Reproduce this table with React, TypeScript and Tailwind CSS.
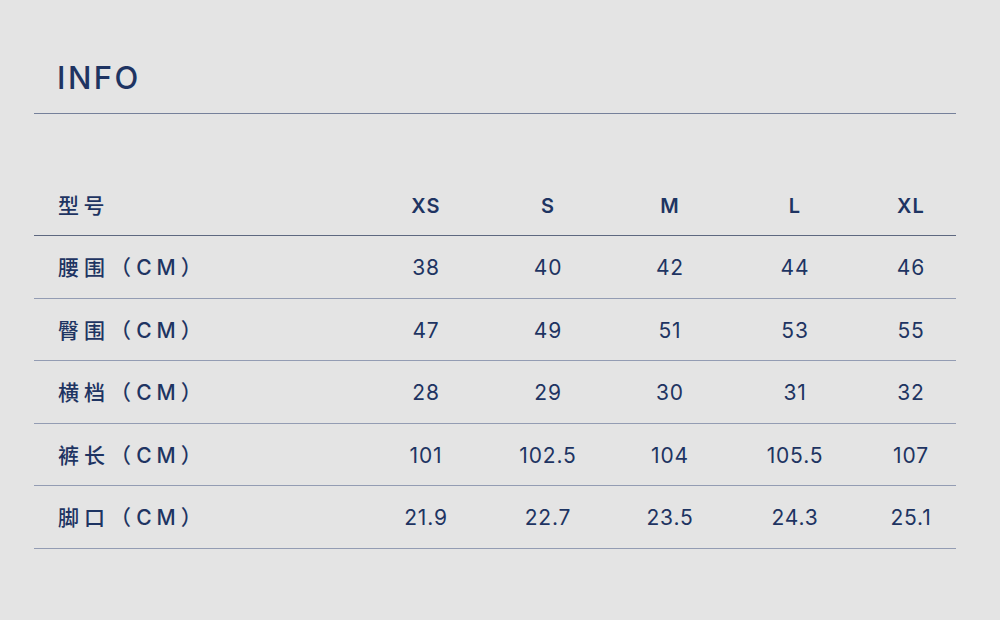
import React from "react";

const sizes = ["XS", "S", "M", "L", "XL"];
const rows: { label: string; values: string[] }[] = [
  { label: "腰围", values: ["38", "40", "42", "44", "46"] },
  { label: "臀围", values: ["47", "49", "51", "53", "55"] },
  { label: "横档", values: ["28", "29", "30", "31", "32"] },
  { label: "裤长", values: ["101", "102.5", "104", "105.5", "107"] },
  { label: "脚口", values: ["21.9", "22.7", "23.5", "24.3", "25.1"] },
];

const grid = "grid grid-cols-[331px_122px_122px_122px_128px_97px] items-center";
const font = { fontFamily: "Inter, 'Noto Sans CJK SC', sans-serif" };

export default function App() {
  return (
    <div
      className="w-[1000px] h-[620px] bg-[#e4e4e4] pl-[34px] pr-[44px] pt-[56px] text-[#1e3462]"
      style={font}
    >
      <div className="pl-[23px] h-[42px] flex items-center text-[31px] font-medium tracking-[0.08em] leading-none">
        INFO
      </div>
      <div className="mt-[15px] h-[1px] bg-[#75809a]" />
      <div className="mt-[60px]">
        <div className={`${grid} h-[62px] pt-[3px] border-b border-[#5e6880]`}>
          <div className="pl-[24px] text-[21px] font-medium tracking-[0.22em]">型号</div>
          {sizes.map((s, i) => (
            <div
              key={s}
              className={`text-center text-[20px] font-semibold tracking-[0.06em] ${i === 4 ? "pl-[7px]" : ""}`}
            >
              {s}
            </div>
          ))}
        </div>
        {rows.map((r) => (
          <div key={r.label} className={`${grid} h-[62.5px] pt-[2px] border-b border-[#939cb3]`}>
            <div className="pl-[24px] text-[21px] font-medium tracking-[0.24em] whitespace-nowrap">
              {r.label}（CM）
            </div>
            {r.values.map((v, i) => (
              <div
                key={i}
                className={`text-center text-[21px] font-normal tracking-[0.04em] ${i === 4 ? "pl-[7px]" : ""}`}
              >
                {v}
              </div>
            ))}
          </div>
        ))}
      </div>
    </div>
  );
}
